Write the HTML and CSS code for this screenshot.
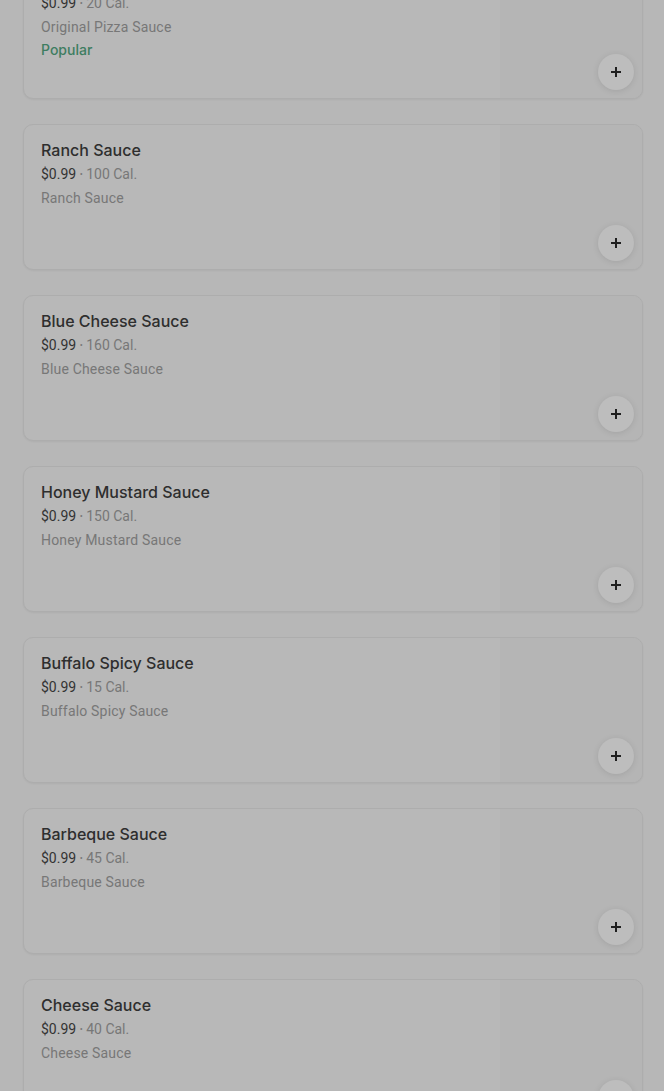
FILE: index.html
```html
<!DOCTYPE html>
<html lang="en">
<head>
<meta charset="utf-8">
<title>Sauces</title>
<link rel="stylesheet" href="styles.css">
</head>
<body>
<main class="list">
  <article class="card">
    <div class="info">
      <h3 class="title">Original Pizza Sauce</h3>
      <p class="meta"><span class="price">$0.99</span> <span class="dot">•</span> 20 Cal.</p>
      <p class="desc">Original Pizza Sauce</p>
      <p class="tag">Popular</p>
    </div>
    <div class="thumb"></div>
    <button class="add" aria-label="Add"><svg viewBox="0 0 12 12" width="12" height="12"><path d="M6 1v10M1 6h10" stroke="#1f1f1f" stroke-width="2"/></svg></button>
  </article>
  <article class="card">
    <div class="info">
      <h3 class="title">Ranch Sauce</h3>
      <p class="meta"><span class="price">$0.99</span> <span class="dot">•</span> 100 Cal.</p>
      <p class="desc">Ranch Sauce</p>
    </div>
    <div class="thumb"></div>
    <button class="add" aria-label="Add"><svg viewBox="0 0 12 12" width="12" height="12"><path d="M6 1v10M1 6h10" stroke="#1f1f1f" stroke-width="2"/></svg></button>
  </article>
  <article class="card">
    <div class="info">
      <h3 class="title">Blue Cheese Sauce</h3>
      <p class="meta"><span class="price">$0.99</span> <span class="dot">•</span> 160 Cal.</p>
      <p class="desc">Blue Cheese Sauce</p>
    </div>
    <div class="thumb"></div>
    <button class="add" aria-label="Add"><svg viewBox="0 0 12 12" width="12" height="12"><path d="M6 1v10M1 6h10" stroke="#1f1f1f" stroke-width="2"/></svg></button>
  </article>
  <article class="card">
    <div class="info">
      <h3 class="title">Honey Mustard Sauce</h3>
      <p class="meta"><span class="price">$0.99</span> <span class="dot">•</span> 150 Cal.</p>
      <p class="desc">Honey Mustard Sauce</p>
    </div>
    <div class="thumb"></div>
    <button class="add" aria-label="Add"><svg viewBox="0 0 12 12" width="12" height="12"><path d="M6 1v10M1 6h10" stroke="#1f1f1f" stroke-width="2"/></svg></button>
  </article>
  <article class="card">
    <div class="info">
      <h3 class="title">Buffalo Spicy Sauce</h3>
      <p class="meta"><span class="price">$0.99</span> <span class="dot">•</span> 15 Cal.</p>
      <p class="desc">Buffalo Spicy Sauce</p>
    </div>
    <div class="thumb"></div>
    <button class="add" aria-label="Add"><svg viewBox="0 0 12 12" width="12" height="12"><path d="M6 1v10M1 6h10" stroke="#1f1f1f" stroke-width="2"/></svg></button>
  </article>
  <article class="card">
    <div class="info">
      <h3 class="title">Barbeque Sauce</h3>
      <p class="meta"><span class="price">$0.99</span> <span class="dot">•</span> 45 Cal.</p>
      <p class="desc">Barbeque Sauce</p>
    </div>
    <div class="thumb"></div>
    <button class="add" aria-label="Add"><svg viewBox="0 0 12 12" width="12" height="12"><path d="M6 1v10M1 6h10" stroke="#1f1f1f" stroke-width="2"/></svg></button>
  </article>
  <article class="card">
    <div class="info">
      <h3 class="title">Cheese Sauce</h3>
      <p class="meta"><span class="price">$0.99</span> <span class="dot">•</span> 40 Cal.</p>
      <p class="desc">Cheese Sauce</p>
    </div>
    <div class="thumb"></div>
    <button class="add" aria-label="Add"><svg viewBox="0 0 12 12" width="12" height="12"><path d="M6 1v10M1 6h10" stroke="#1f1f1f" stroke-width="2"/></svg></button>
  </article>
</main>
</body>
</html>
```
FILE: styles.css
```css
html, body {
  margin: 0;
  padding: 0;
  background: #b7b7b7;
  overflow: hidden;
  height: 1091px;
  font-family: Inter, "Noto Sans", Roboto, sans-serif;
}

.list {
  display: flex;
  flex-direction: column;
  gap: 25px;
  margin: -47px 21px 0 23px;
}

.card {
  position: relative;
  display: flex;
  height: 146px;
  box-sizing: border-box;
  border: 1px solid #adadad;
  border-radius: 10px;
  background: #b8b8b8;
  box-shadow: 0 1px 2px rgba(0, 0, 0, 0.05);
  overflow: hidden;
}

.info {
  flex: 1;
  padding: 13px 16px 0 17px;
}

.thumb {
  width: 142px;
  background: #b5b5b5;
}

.title {
  margin: 0;
  font-size: 16px;
  line-height: 24px;
  font-weight: 500;
  color: #2e2e2e;
}

.meta, .desc, .tag {
  margin: 0;
  font-size: 14px;
  line-height: 24px;
}

.meta, .desc {
  font-family: Roboto, "Liberation Sans", sans-serif;
}

.meta {
  color: #777777;
}

.price {
  color: #333333;
}

.dot {
  font-size: 9px;
  vertical-align: 2px;
}

.desc {
  color: #777777;
  letter-spacing: 0.18px;
}

.tag {
  line-height: 20px;
  margin-top: 1px;
  font-weight: 500;
  color: #3e7d61;
}

.add {
  position: absolute;
  right: 8px;
  bottom: 8px;
  width: 36px;
  height: 36px;
  border: none;
  border-radius: 50%;
  padding: 0;
  background: #bdbdbd;
  box-shadow: 0 1px 6px rgba(0, 0, 0, 0.1);
  display: flex;
  align-items: center;
  justify-content: center;
}
```
